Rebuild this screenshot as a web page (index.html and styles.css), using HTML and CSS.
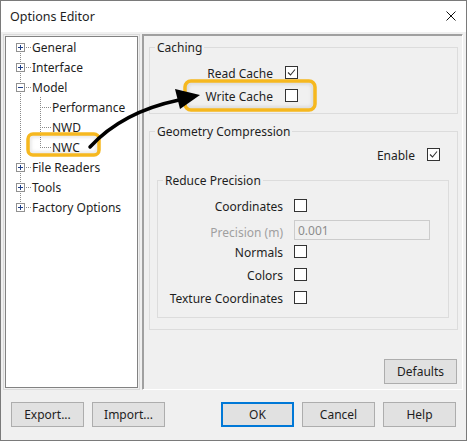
FILE: index.html
```html
<!DOCTYPE html>
<html>
<head>
<meta charset="utf-8">
<link rel="stylesheet" href="styles.css">
</head>
<body>
<div class="window">
  <div class="titlebar">
    <span class="title">Options Editor</span>
    <svg class="close" width="10" height="10" viewBox="0 0 10 10"><path d="M0.5 0.5L9.5 9.5M9.5 0.5L0.5 9.5" stroke="#111" stroke-width="1" fill="none"/></svg>
  </div>
  <div class="main">
    <div class="tree-wrap">
      <div class="tree">
        <svg class="lines" width="130" height="200" viewBox="0 0 130 200">
          <g stroke="#8a8a8a" stroke-width="1" stroke-dasharray="1 1" fill="none">
            <path d="M14.5 16V26M14.5 36V46M14.5 56V126M14.5 136V146M14.5 156V166"/>
            <path d="M20 10.5H26M20 30.5H26M20 50.5H26M20 130.5H26M20 150.5H26M20 170.5H26"/>
            <path d="M34.5 60V111"/>
            <path d="M36 70.5H45M36 90.5H45M36 110.5H45"/>
          </g>
        </svg>
        <div class="row"><svg class="exp" viewBox="0 0 9 9"><rect x="0.5" y="0.5" width="8" height="8" fill="#fff" stroke="#919191"/><path d="M2 4.5H7M4.5 2V7" stroke="#1f3f86"/></svg><span>General</span></div>
        <div class="row"><svg class="exp" viewBox="0 0 9 9"><rect x="0.5" y="0.5" width="8" height="8" fill="#fff" stroke="#919191"/><path d="M2 4.5H7M4.5 2V7" stroke="#1f3f86"/></svg><span>Interface</span></div>
        <div class="row"><svg class="exp" viewBox="0 0 9 9"><rect x="0.5" y="0.5" width="8" height="8" fill="#fff" stroke="#919191"/><path d="M2 4.5H7" stroke="#1f3f86"/></svg><span>Model</span></div>
        <div class="row child"><span>Performance</span></div>
        <div class="row child"><span>NWD</span></div>
        <div class="row child"><span>NWC</span></div>
        <div class="row"><svg class="exp" viewBox="0 0 9 9"><rect x="0.5" y="0.5" width="8" height="8" fill="#fff" stroke="#919191"/><path d="M2 4.5H7M4.5 2V7" stroke="#1f3f86"/></svg><span>File Readers</span></div>
        <div class="row"><svg class="exp" viewBox="0 0 9 9"><rect x="0.5" y="0.5" width="8" height="8" fill="#fff" stroke="#919191"/><path d="M2 4.5H7M4.5 2V7" stroke="#1f3f86"/></svg><span>Tools</span></div>
        <div class="row"><svg class="exp" viewBox="0 0 9 9"><rect x="0.5" y="0.5" width="8" height="8" fill="#fff" stroke="#919191"/><path d="M2 4.5H7M4.5 2V7" stroke="#1f3f86"/></svg><span>Factory Options</span></div>
      </div>
    </div>
    <div class="panel">
      <div class="grp caching">
        <div class="grp-title">Caching</div>
        <div class="rows">
          <div class="frow"><span class="lbl">Read Cache</span><span class="cb"><svg viewBox="0 0 11 11" width="11" height="11"><path d="M2 5.5L4.5 8L9 2.5" stroke="#333" stroke-width="1.1" fill="none"/></svg></span></div>
          <div class="frow"><span class="lbl">Write Cache</span><span class="cb"></span></div>
        </div>
      </div>
      <div class="grp geo">
        <div class="grp-title">Geometry Compression</div>
        <div class="enable-row"><span class="lbl">Enable</span><span class="cb"><svg viewBox="0 0 11 11" width="11" height="11"><path d="M2 5.5L4.5 8L9 2.5" stroke="#333" stroke-width="1.1" fill="none"/></svg></span></div>
        <div class="grp reduce">
          <div class="grp-title">Reduce Precision</div>
          <div class="rows">
            <div class="frow"><span class="lbl">Coordinates</span><span class="cb"></span></div>
            <div class="frow prec"><span class="lbl disabled">Precision (m)</span><span class="inp">0.001</span></div>
            <div class="frow"><span class="lbl">Normals</span><span class="cb"></span></div>
            <div class="frow"><span class="lbl">Colors</span><span class="cb"></span></div>
            <div class="frow"><span class="lbl">Texture Coordinates</span><span class="cb"></span></div>
          </div>
        </div>
      </div>
      <div class="panel-foot"><button class="btn">Defaults</button></div>
    </div>
  </div>
  <div class="footer">
    <div class="bgroup">
      <button class="btn">Export...</button>
      <button class="btn">Import...</button>
    </div>
    <div class="bgroup right">
      <button class="btn ok">OK</button>
      <button class="btn">Cancel</button>
      <button class="btn">Help</button>
    </div>
  </div>
  <svg class="annot" width="467" height="441" viewBox="0 0 467 441">
    <defs>
      <filter id="sh" x="-10%" y="-20%" width="120%" height="140%">
        <feGaussianBlur stdDeviation="1.5"/>
      </filter>
    </defs>
    <rect x="30" y="136" width="67" height="17" rx="4" fill="none" stroke="rgba(0,0,0,0.10)" stroke-width="3" filter="url(#sh)"/>
    <rect x="187" y="83" width="126" height="25" rx="5" fill="none" stroke="rgba(0,0,0,0.10)" stroke-width="3" filter="url(#sh)"/>
    <rect x="28" y="134" width="71" height="21" rx="5" fill="none" stroke="#f6b81f" stroke-width="3.5"/>
    <rect x="185" y="81" width="130" height="29" rx="6" fill="none" stroke="#f6b81f" stroke-width="3.5"/>
    <path d="M90 147Q122 112 179 100" fill="none" stroke="#000" stroke-width="3.5" stroke-linecap="round"/>
    <polygon points="200,95 175,89 180,109" fill="#000"/>
  </svg>
</div>
</body>
</html>
```

FILE: styles.css
```css
body {
  margin: 0;
  font-family: "Noto Sans", "Liberation Sans", sans-serif;
  font-size: 12px;
  color: #1e1e1e;
}

.window {
  position: relative;
  width: 467px;
  height: 441px;
  box-sizing: border-box;
  border: 1px solid #7a7a7a;
  background: #f0f0f0;
  display: flex;
  flex-direction: column;
  overflow: hidden;
}

.titlebar {
  flex: none;
  height: 31px;
  background: #fff;
  display: flex;
  align-items: center;
  justify-content: space-between;
  padding: 0 10px 0 9px;
  font-size: 12.5px;
}

.close {
  display: block;
  margin-top: -1px;
}

.main {
  flex: none;
  height: 358px;
  box-sizing: border-box;
  display: flex;
  padding: 2px 3px 0 2px;
}

.tree-wrap {
  width: 137px;
  box-sizing: border-box;
  border: 1px solid #dadada;
  padding: 1px;
}

.tree {
  position: relative;
  height: 100%;
  box-sizing: border-box;
  border: 1px solid #828282;
  background: #fff;
}

.lines {
  position: absolute;
  left: 0;
  top: 0;
}

.row {
  position: relative;
  height: 20px;
  display: flex;
  align-items: center;
  padding-left: 10px;
  gap: 7px;
  line-height: 16px;
}

.row.child {
  padding-left: 46px;
}

.exp {
  display: block;
  width: 9px;
  height: 9px;
  align-self: flex-start;
  margin-top: 6px;
}

.row span {
  position: relative;
  top: 1px;
}

.panel {
  flex: 1;
  margin-left: 2px;
  display: flex;
  flex-direction: column;
  border: 1px solid;
  border-color: #a0a0a0 #fff #fff #a0a0a0;
  box-shadow: inset 1px 1px 0 #a0a0a0;
  padding: 12px 4px 5px 6px;
}

.grp {
  border: 1px solid #dcdcdc;
}

.grp-title {
  position: relative;
  top: 1px;
  width: fit-content;
  margin: -9px 0 0 5px;
  padding: 0 2px;
  background: #f0f0f0;
  line-height: 16px;
}

.rows {
  margin-top: 5px;
}

.frow {
  height: 23px;
  display: flex;
  align-items: center;
}

.lbl {
  position: relative;
  top: 1px;
  text-align: right;
  line-height: 16px;
}

.caching {
  padding-bottom: 6px;
}

.caching .rows {
  margin-top: 6px;
}

.caching .lbl {
  width: 123px;
}

.caching .cb {
  margin-left: 12px;
}

.cb {
  flex: none;
  width: 13px;
  height: 13px;
  box-sizing: border-box;
  border: 1px solid #333;
  background: #fff;
  display: flex;
  align-items: center;
  justify-content: center;
}

.cb svg {
  display: block;
}

.geo {
  margin-top: 17px;
}

.enable-row {
  margin-top: 4px;
  height: 23px;
  display: flex;
  align-items: center;
  justify-content: flex-end;
  padding-right: 17px;
  gap: 12px;
}

.reduce {
  margin: 14px 8px 11px 7px;
  padding-bottom: 8px;
}

.reduce .rows {
  margin-top: 6px;
}

.reduce .lbl {
  width: 125px;
}

.reduce .cb {
  margin-left: 11px;
}

.disabled {
  color: #a0a0a0;
}

.frow.prec {
  align-items: flex-end;
}

.inp {
  margin-left: 11px;
  width: 136px;
  height: 20px;
  box-sizing: border-box;
  border: 1px solid #cccccc;
  background: #f0f0f0;
  color: #8c8c8c;
  padding-left: 3px;
  line-height: 19px;
}

.panel-foot {
  margin-top: auto;
  display: flex;
  justify-content: flex-end;
  padding-right: 1px;
}

.btn {
  width: 73px;
  height: 25px;
  box-sizing: border-box;
  border: 1px solid #adadad;
  background: #e1e1e1;
  font-family: "Noto Sans", "Liberation Sans", sans-serif;
  font-size: 12px;
  color: #1e1e1e;
  padding: 0;
  margin: 0;
}

.btn.ok {
  border: 2px solid #0078d7;
}

.footer {
  flex: none;
  display: flex;
  padding: 12px 10px 0 10px;
}

.bgroup {
  display: flex;
  gap: 8px;
}

.bgroup.right {
  margin-left: auto;
}

.annot {
  position: absolute;
  left: -1px;
  top: -1px;
  pointer-events: none;
}
```
